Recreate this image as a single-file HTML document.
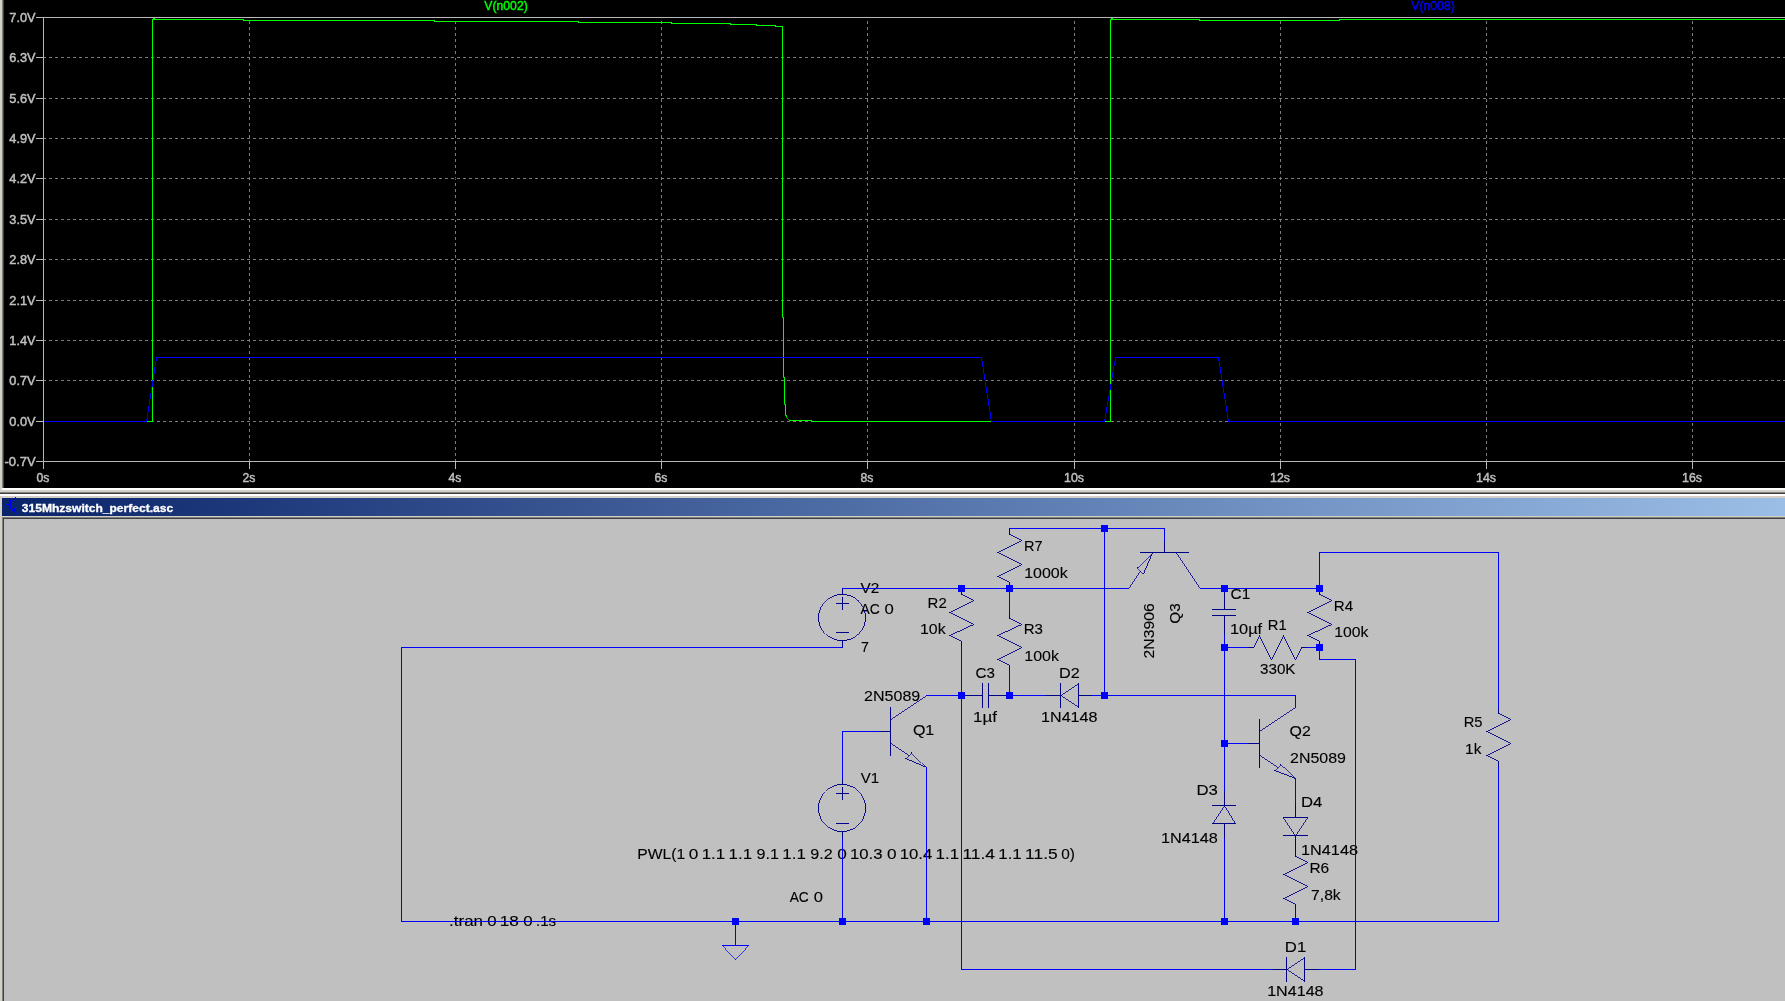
<!DOCTYPE html>
<html><head><meta charset="utf-8"><title>LTspice</title>
<style>
html,body{margin:0;padding:0;background:#c0c0c0;}
body{width:1785px;height:1001px;overflow:hidden;position:relative;font-family:"Liberation Sans",sans-serif;}
svg{position:absolute;left:0;top:0;display:block;will-change:transform;}
text{font-family:"Liberation Sans",sans-serif;white-space:pre;}
.c{shape-rendering:crispEdges;fill:none;stroke-width:1;stroke-linecap:square;}
</style></head><body>
<svg width="1785" height="1001" viewBox="0 0 1785 1001">
<defs><linearGradient id="tg" gradientUnits="userSpaceOnUse" x1="2" y1="0" x2="1922" y2="0"><stop offset="0" stop-color="#0a246a"/><stop offset="1" stop-color="#a6caf0"/></linearGradient></defs>
<g shape-rendering="crispEdges">
<rect x="0" y="0" width="1785" height="1001" fill="#c0c0c0"/>
<rect x="0" y="0" width="2" height="1001" fill="#d4d0c8"/>
<rect x="2" y="0" width="1" height="488" fill="#808080"/>
<rect x="3" y="0" width="1" height="488" fill="#404040"/>
<rect x="4" y="0" width="1781" height="488" fill="#000"/>
<rect x="2" y="488" width="1783" height="2" fill="#fff"/>
<rect x="0" y="490" width="1785" height="2" fill="#d4d0c8"/>
<rect x="0" y="492" width="1785" height="1" fill="#808080"/>
<rect x="0" y="493" width="1785" height="1" fill="#404040"/>
<rect x="0" y="494" width="1785" height="2" fill="#fff"/>
<rect x="0" y="496" width="1785" height="2" fill="#d4d0c8"/>
<rect x="2" y="498" width="1783" height="18" fill="url(#tg)"/>
<rect x="0" y="516" width="1785" height="1" fill="#d4d0c8"/>
<rect x="2" y="517" width="1783" height="1" fill="#808080"/>
<rect x="2" y="518" width="1" height="483" fill="#808080"/>
<rect x="3" y="518" width="1782" height="1" fill="#404040"/>
<rect x="3" y="519" width="1" height="482" fill="#404040"/>
</g>
<g class="c" style="stroke-linecap:butt">
<line x1="249.5" y1="21" x2="249.5" y2="461" stroke="#7c7c7c" stroke-dasharray="3 3"/>
<line x1="455.5" y1="21" x2="455.5" y2="461" stroke="#7c7c7c" stroke-dasharray="3 3"/>
<line x1="661.5" y1="21" x2="661.5" y2="461" stroke="#7c7c7c" stroke-dasharray="3 3"/>
<line x1="867.5" y1="21" x2="867.5" y2="461" stroke="#7c7c7c" stroke-dasharray="3 3"/>
<line x1="1074.5" y1="21" x2="1074.5" y2="461" stroke="#7c7c7c" stroke-dasharray="3 3"/>
<line x1="1280.5" y1="21" x2="1280.5" y2="461" stroke="#7c7c7c" stroke-dasharray="3 3"/>
<line x1="1486.5" y1="21" x2="1486.5" y2="461" stroke="#7c7c7c" stroke-dasharray="3 3"/>
<line x1="1692.5" y1="21" x2="1692.5" y2="461" stroke="#7c7c7c" stroke-dasharray="3 3"/>
<line x1="44" y1="57.5" x2="1785" y2="57.5" stroke="#000"/>
<line x1="43" y1="57.5" x2="1785" y2="57.5" stroke="#7c7c7c" stroke-dasharray="3 3"/>
<line x1="44" y1="98.5" x2="1785" y2="98.5" stroke="#000"/>
<line x1="43" y1="98.5" x2="1785" y2="98.5" stroke="#7c7c7c" stroke-dasharray="3 3"/>
<line x1="44" y1="138.5" x2="1785" y2="138.5" stroke="#000"/>
<line x1="43" y1="138.5" x2="1785" y2="138.5" stroke="#7c7c7c" stroke-dasharray="3 3"/>
<line x1="44" y1="178.5" x2="1785" y2="178.5" stroke="#000"/>
<line x1="43" y1="178.5" x2="1785" y2="178.5" stroke="#7c7c7c" stroke-dasharray="3 3"/>
<line x1="44" y1="219.5" x2="1785" y2="219.5" stroke="#000"/>
<line x1="43" y1="219.5" x2="1785" y2="219.5" stroke="#7c7c7c" stroke-dasharray="3 3"/>
<line x1="44" y1="259.5" x2="1785" y2="259.5" stroke="#000"/>
<line x1="43" y1="259.5" x2="1785" y2="259.5" stroke="#7c7c7c" stroke-dasharray="3 3"/>
<line x1="44" y1="300.5" x2="1785" y2="300.5" stroke="#000"/>
<line x1="43" y1="300.5" x2="1785" y2="300.5" stroke="#7c7c7c" stroke-dasharray="3 3"/>
<line x1="44" y1="340.5" x2="1785" y2="340.5" stroke="#000"/>
<line x1="43" y1="340.5" x2="1785" y2="340.5" stroke="#7c7c7c" stroke-dasharray="3 3"/>
<line x1="44" y1="380.5" x2="1785" y2="380.5" stroke="#000"/>
<line x1="43" y1="380.5" x2="1785" y2="380.5" stroke="#7c7c7c" stroke-dasharray="3 3"/>
<line x1="44" y1="421.5" x2="1785" y2="421.5" stroke="#000"/>
<line x1="43" y1="421.5" x2="1785" y2="421.5" stroke="#7c7c7c" stroke-dasharray="3 3"/>
<line x1="36" y1="17.5" x2="1785" y2="17.5" stroke="#b8b8b8"/>
<line x1="36" y1="461.5" x2="1785" y2="461.5" stroke="#b8b8b8"/>
<line x1="43.5" y1="17" x2="43.5" y2="469" stroke="#b8b8b8"/>
<line x1="36" y1="57.5" x2="43" y2="57.5" stroke="#b8b8b8"/>
<line x1="36" y1="98.5" x2="43" y2="98.5" stroke="#b8b8b8"/>
<line x1="36" y1="138.5" x2="43" y2="138.5" stroke="#b8b8b8"/>
<line x1="36" y1="178.5" x2="43" y2="178.5" stroke="#b8b8b8"/>
<line x1="36" y1="219.5" x2="43" y2="219.5" stroke="#b8b8b8"/>
<line x1="36" y1="259.5" x2="43" y2="259.5" stroke="#b8b8b8"/>
<line x1="36" y1="300.5" x2="43" y2="300.5" stroke="#b8b8b8"/>
<line x1="36" y1="340.5" x2="43" y2="340.5" stroke="#b8b8b8"/>
<line x1="36" y1="380.5" x2="43" y2="380.5" stroke="#b8b8b8"/>
<line x1="36" y1="421.5" x2="43" y2="421.5" stroke="#b8b8b8"/>
<line x1="249.5" y1="462" x2="249.5" y2="469" stroke="#b8b8b8"/>
<line x1="455.5" y1="462" x2="455.5" y2="469" stroke="#b8b8b8"/>
<line x1="661.5" y1="462" x2="661.5" y2="469" stroke="#b8b8b8"/>
<line x1="867.5" y1="462" x2="867.5" y2="469" stroke="#b8b8b8"/>
<line x1="1074.5" y1="462" x2="1074.5" y2="469" stroke="#b8b8b8"/>
<line x1="1280.5" y1="462" x2="1280.5" y2="469" stroke="#b8b8b8"/>
<line x1="1486.5" y1="462" x2="1486.5" y2="469" stroke="#b8b8b8"/>
<line x1="1692.5" y1="462" x2="1692.5" y2="469" stroke="#b8b8b8"/>
</g><g class="c">
<line x1="44.5" y1="421.5" x2="152.5" y2="421.5" stroke="#00ff00"/><line x1="152.5" y1="421.5" x2="152.5" y2="19.5" stroke="#00ff00"/><line x1="152.5" y1="19.5" x2="243.5" y2="19.5" stroke="#00ff00"/><line x1="243.5" y1="19.5" x2="243.5" y2="20.5" stroke="#00ff00"/><line x1="243.5" y1="20.5" x2="434.5" y2="20.5" stroke="#00ff00"/><line x1="434.5" y1="20.5" x2="434.5" y2="21.5" stroke="#00ff00"/><line x1="434.5" y1="21.5" x2="578.5" y2="21.5" stroke="#00ff00"/><line x1="578.5" y1="21.5" x2="578.5" y2="22.5" stroke="#00ff00"/><line x1="578.5" y1="22.5" x2="671.5" y2="22.5" stroke="#00ff00"/><line x1="671.5" y1="22.5" x2="671.5" y2="23.5" stroke="#00ff00"/><line x1="671.5" y1="23.5" x2="730.5" y2="23.5" stroke="#00ff00"/><line x1="730.5" y1="23.5" x2="730.5" y2="24.5" stroke="#00ff00"/><line x1="730.5" y1="24.5" x2="756.5" y2="24.5" stroke="#00ff00"/><line x1="756.5" y1="24.5" x2="756.5" y2="25.5" stroke="#00ff00"/><line x1="756.5" y1="25.5" x2="775.5" y2="25.5" stroke="#00ff00"/><line x1="775.5" y1="25.5" x2="775.5" y2="26.5" stroke="#00ff00"/><line x1="775.5" y1="26.5" x2="782.5" y2="26.5" stroke="#00ff00"/><line x1="782.5" y1="26.5" x2="782.5" y2="316.5" stroke="#00ff00"/><line x1="782.75" y1="316.50" x2="783.75" y2="317.50" stroke="#00ff00" stroke-width="0.700" stroke-linecap="butt"/><line x1="783.5" y1="317.5" x2="783.5" y2="376.5" stroke="#00ff00"/><line x1="783.75" y1="376.50" x2="784.75" y2="377.50" stroke="#00ff00" stroke-width="0.700" stroke-linecap="butt"/><line x1="784.5" y1="377.5" x2="784.5" y2="403.5" stroke="#00ff00"/><line x1="784.75" y1="403.50" x2="785.75" y2="404.50" stroke="#00ff00" stroke-width="0.700" stroke-linecap="butt"/><line x1="785.5" y1="404.5" x2="785.5" y2="414.5" stroke="#00ff00"/><line x1="785.75" y1="414.50" x2="786.75" y2="415.50" stroke="#00ff00" stroke-width="0.700" stroke-linecap="butt"/><line x1="786.5" y1="415.5" x2="786.5" y2="416.5" stroke="#00ff00"/><line x1="786.75" y1="416.50" x2="790.75" y2="420.50" stroke="#00ff00" stroke-width="0.700" stroke-linecap="butt"/><line x1="790.5" y1="420.5" x2="811.5" y2="420.5" stroke="#00ff00"/><line x1="811.5" y1="420.5" x2="811.5" y2="421.5" stroke="#00ff00"/><line x1="811.5" y1="421.5" x2="1110.5" y2="421.5" stroke="#00ff00"/><line x1="1110.5" y1="421.5" x2="1110.5" y2="19.5" stroke="#00ff00"/><line x1="1110.5" y1="19.5" x2="1199.5" y2="19.5" stroke="#00ff00"/><line x1="1199.5" y1="19.5" x2="1199.5" y2="20.5" stroke="#00ff00"/><line x1="1199.5" y1="20.5" x2="1339.5" y2="20.5" stroke="#00ff00"/><line x1="1339.5" y1="20.5" x2="1339.5" y2="19.5" stroke="#00ff00"/><line x1="1339.5" y1="19.5" x2="1785.5" y2="19.5" stroke="#00ff00"/>
<path d="M1111.5,18.5 h1" stroke="#00ff00"/>
<path d="M153.5,18.5 h1" stroke="#00ff00"/>
<line x1="44.5" y1="421.5" x2="146.5" y2="421.5" stroke="#0000ff"/><line x1="146.50" y1="421.75" x2="156.50" y2="357.75" stroke="#0000ff" stroke-width="0.978" stroke-linecap="butt"/><line x1="156.5" y1="357.5" x2="981.5" y2="357.5" stroke="#0000ff"/><line x1="981.50" y1="357.75" x2="991.50" y2="421.75" stroke="#0000ff" stroke-width="0.978" stroke-linecap="butt"/><line x1="991.5" y1="421.5" x2="1104.5" y2="421.5" stroke="#0000ff"/><line x1="1104.50" y1="421.75" x2="1115.50" y2="357.75" stroke="#0000ff" stroke-width="0.976" stroke-linecap="butt"/><line x1="1115.5" y1="357.5" x2="1218.5" y2="357.5" stroke="#0000ff"/><line x1="1218.50" y1="357.75" x2="1228.50" y2="421.75" stroke="#0000ff" stroke-width="0.978" stroke-linecap="butt"/><line x1="1228.5" y1="421.5" x2="1785.5" y2="421.5" stroke="#0000ff"/>
</g>
<g>
<text transform="translate(860.40,593.00) scale(1.0094,1.0000)" style="font-size:15.2px;fill:#000;stroke:#000;stroke-width:0.12px">V2</text>
<text transform="translate(860.40,613.50) scale(0.9111,1.0000)" style="font-size:15.2px;fill:#000;stroke:#000;stroke-width:0.12px">AC</text>
<text transform="translate(884.60,613.50) scale(1.1003,1.0000)" style="font-size:15.2px;fill:#000;stroke:#000;stroke-width:0.12px">0</text>
<text transform="translate(860.90,651.50) scale(0.9375,1.0000)" style="font-size:15.2px;fill:#000;stroke:#000;stroke-width:0.12px">7</text>
<text transform="translate(927.61,608.00) scale(0.9851,1.0000)" style="font-size:15.2px;fill:#000;stroke:#000;stroke-width:0.12px">R2</text>
<text transform="translate(919.95,634.00) scale(1.0463,1.0000)" style="font-size:15.2px;fill:#000;stroke:#000;stroke-width:0.12px">10k</text>
<text transform="translate(1023.94,551.00) scale(0.9573,1.0000)" style="font-size:15.2px;fill:#000;stroke:#000;stroke-width:0.12px">R7</text>
<text transform="translate(1024.15,578.00) scale(1.0518,1.0000)" style="font-size:15.2px;fill:#000;stroke:#000;stroke-width:0.12px">1000k</text>
<text transform="translate(1023.71,634.00) scale(0.9907,1.0000)" style="font-size:15.2px;fill:#000;stroke:#000;stroke-width:0.12px">R3</text>
<text transform="translate(1024.25,660.50) scale(1.0513,1.0000)" style="font-size:15.2px;fill:#000;stroke:#000;stroke-width:0.12px">100k</text>
<text transform="translate(975.60,678.00) scale(0.9964,1.0000)" style="font-size:15.2px;fill:#000;stroke:#000;stroke-width:0.12px">C3</text>
<text transform="translate(972.98,721.50) scale(1.1181,1.0000)" style="font-size:15.2px;fill:#000;stroke:#000;stroke-width:0.12px">1µf</text>
<text transform="translate(1059.03,678.00) scale(1.0686,1.0000)" style="font-size:15.2px;fill:#000;stroke:#000;stroke-width:0.12px">D2</text>
<text transform="translate(1041.04,721.50) scale(1.0608,1.0000)" style="font-size:15.2px;fill:#000;stroke:#000;stroke-width:0.12px">1N4148</text>
<text transform="translate(864.10,700.70) scale(1.0558,1.0000)" style="font-size:15.2px;fill:#000;stroke:#000;stroke-width:0.12px">2N5089</text>
<text transform="translate(912.90,734.60) scale(1.0548,1.0000)" style="font-size:15.2px;fill:#000;stroke:#000;stroke-width:0.12px">Q1</text>
<text transform="translate(860.70,782.70) scale(0.9873,1.0000)" style="font-size:15.2px;fill:#000;stroke:#000;stroke-width:0.12px">V1</text>
<text transform="translate(637.17,858.60) scale(1.0327,1.0000)" style="font-size:15.2px;fill:#000;stroke:#000;stroke-width:0.12px">PWL(1</text>
<text transform="translate(688.87,858.60) scale(1.1313,1.0000)" style="font-size:15.2px;fill:#000;stroke:#000;stroke-width:0.12px">0</text>
<text transform="translate(701.69,858.60) scale(1.1128,1.0000)" style="font-size:15.2px;fill:#000;stroke:#000;stroke-width:0.12px">1.1</text>
<text transform="translate(728.56,858.60) scale(1.1128,1.0000)" style="font-size:15.2px;fill:#000;stroke:#000;stroke-width:0.12px">1.1</text>
<text transform="translate(756.54,858.60) scale(1.0589,1.0000)" style="font-size:15.2px;fill:#000;stroke:#000;stroke-width:0.12px">9.1</text>
<text transform="translate(782.30,858.60) scale(1.1128,1.0000)" style="font-size:15.2px;fill:#000;stroke:#000;stroke-width:0.12px">1.1</text>
<text transform="translate(810.29,858.60) scale(1.0589,1.0000)" style="font-size:15.2px;fill:#000;stroke:#000;stroke-width:0.12px">9.2</text>
<text transform="translate(837.16,858.60) scale(1.1313,1.0000)" style="font-size:15.2px;fill:#000;stroke:#000;stroke-width:0.12px">0</text>
<text transform="translate(849.99,858.60) scale(1.1004,1.0000)" style="font-size:15.2px;fill:#000;stroke:#000;stroke-width:0.12px">10.3</text>
<text transform="translate(886.92,858.60) scale(1.1313,1.0000)" style="font-size:15.2px;fill:#000;stroke:#000;stroke-width:0.12px">0</text>
<text transform="translate(899.75,858.60) scale(1.1004,1.0000)" style="font-size:15.2px;fill:#000;stroke:#000;stroke-width:0.12px">10.4</text>
<text transform="translate(935.57,858.60) scale(1.1128,1.0000)" style="font-size:15.2px;fill:#000;stroke:#000;stroke-width:0.12px">1.1</text>
<text transform="translate(962.41,858.60) scale(1.1464,1.0000)" style="font-size:15.2px;fill:#000;stroke:#000;stroke-width:0.12px">11.4</text>
<text transform="translate(998.27,858.60) scale(1.1128,1.0000)" style="font-size:15.2px;fill:#000;stroke:#000;stroke-width:0.12px">1.1</text>
<text transform="translate(1025.11,858.60) scale(1.1464,1.0000)" style="font-size:15.2px;fill:#000;stroke:#000;stroke-width:0.12px">11.5</text>
<text transform="translate(1061.18,858.60) scale(1.0127,1.0000)" style="font-size:15.2px;fill:#000;stroke:#000;stroke-width:0.12px">0)</text>
<text transform="translate(789.70,901.70) scale(0.9029,1.0000)" style="font-size:15.2px;fill:#000;stroke:#000;stroke-width:0.12px">AC</text>
<text transform="translate(813.68,901.70) scale(1.0902,1.0000)" style="font-size:15.2px;fill:#000;stroke:#000;stroke-width:0.12px">0</text>
<text transform="translate(449.08,925.70) scale(1.1154,1.0000)" style="font-size:15.2px;fill:#000;stroke:#000;stroke-width:0.12px">.tran</text>
<text transform="translate(487.26,925.70) scale(1.1086,1.0000)" style="font-size:15.2px;fill:#000;stroke:#000;stroke-width:0.12px">0</text>
<text transform="translate(499.78,925.70) scale(1.1325,1.0000)" style="font-size:15.2px;fill:#000;stroke:#000;stroke-width:0.12px">18</text>
<text transform="translate(523.34,925.70) scale(1.1086,1.0000)" style="font-size:15.2px;fill:#000;stroke:#000;stroke-width:0.12px">0</text>
<text transform="translate(536.00,925.70) scale(0.9968,1.0000)" style="font-size:15.2px;fill:#000;stroke:#000;stroke-width:0.12px">.1s</text>
<text transform="translate(1153.80,658.40) rotate(-90) scale(1.0350,1.0000)" style="font-size:15.2px;fill:#000;stroke:#000;stroke-width:0.12px">2N3906</text>
<text transform="translate(1180.40,623.70) rotate(-90) scale(1.0044,1.0000)" style="font-size:15.2px;fill:#000;stroke:#000;stroke-width:0.12px">Q3</text>
<text transform="translate(1230.60,598.60) scale(1.0070,1.0000)" style="font-size:15.2px;fill:#000;stroke:#000;stroke-width:0.12px">C1</text>
<text transform="translate(1230.02,633.60) scale(1.0761,1.0000)" style="font-size:15.2px;fill:#000;stroke:#000;stroke-width:0.12px">10µf</text>
<text transform="translate(1267.73,629.70) scale(0.9740,1.0000)" style="font-size:15.2px;fill:#000;stroke:#000;stroke-width:0.12px">R1</text>
<text transform="translate(1260.00,673.60) scale(0.9989,1.0000)" style="font-size:15.2px;fill:#000;stroke:#000;stroke-width:0.12px">330K</text>
<text transform="translate(1333.80,610.80) scale(0.9962,1.0000)" style="font-size:15.2px;fill:#000;stroke:#000;stroke-width:0.12px">R4</text>
<text transform="translate(1334.16,636.70) scale(1.0390,1.0000)" style="font-size:15.2px;fill:#000;stroke:#000;stroke-width:0.12px">100k</text>
<text transform="translate(1289.60,735.80) scale(1.0448,1.0000)" style="font-size:15.2px;fill:#000;stroke:#000;stroke-width:0.12px">Q2</text>
<text transform="translate(1290.10,762.70) scale(1.0502,1.0000)" style="font-size:15.2px;fill:#000;stroke:#000;stroke-width:0.12px">2N5089</text>
<text transform="translate(1196.50,794.70) scale(1.1020,1.0000)" style="font-size:15.2px;fill:#000;stroke:#000;stroke-width:0.12px">D3</text>
<text transform="translate(1160.93,842.60) scale(1.0704,1.0000)" style="font-size:15.2px;fill:#000;stroke:#000;stroke-width:0.12px">1N4148</text>
<text transform="translate(1301.00,806.60) scale(1.1020,1.0000)" style="font-size:15.2px;fill:#000;stroke:#000;stroke-width:0.12px">D4</text>
<text transform="translate(1301.03,854.60) scale(1.0704,1.0000)" style="font-size:15.2px;fill:#000;stroke:#000;stroke-width:0.12px">1N4148</text>
<text transform="translate(1309.38,872.60) scale(1.0185,1.0000)" style="font-size:15.2px;fill:#000;stroke:#000;stroke-width:0.12px">R6</text>
<text transform="translate(1311.10,899.60) scale(1.0305,1.0000)" style="font-size:15.2px;fill:#000;stroke:#000;stroke-width:0.12px">7,8k</text>
<text transform="translate(1463.73,726.60) scale(0.9684,1.0000)" style="font-size:15.2px;fill:#000;stroke:#000;stroke-width:0.12px">R5</text>
<text transform="translate(1465.08,753.70) scale(1.0164,1.0000)" style="font-size:15.2px;fill:#000;stroke:#000;stroke-width:0.12px">1k</text>
<text transform="translate(1284.80,951.70) scale(1.1020,1.0000)" style="font-size:15.2px;fill:#000;stroke:#000;stroke-width:0.12px">D1</text>
<text transform="translate(1267.14,995.60) scale(1.0608,1.0000)" style="font-size:15.2px;fill:#000;stroke:#000;stroke-width:0.12px">1N4148</text>
<text transform="translate(9.30,21.85) scale(1.0656,1.0500)" style="font-size:12.0px;fill:#c0c0c0;stroke:#c0c0c0;stroke-width:0.42px">7.0V</text>
<text transform="translate(9.30,61.85) scale(1.0656,1.0500)" style="font-size:12.0px;fill:#c0c0c0;stroke:#c0c0c0;stroke-width:0.42px">6.3V</text>
<text transform="translate(9.30,102.85) scale(1.0656,1.0500)" style="font-size:12.0px;fill:#c0c0c0;stroke:#c0c0c0;stroke-width:0.42px">5.6V</text>
<text transform="translate(9.30,142.85) scale(1.0656,1.0500)" style="font-size:12.0px;fill:#c0c0c0;stroke:#c0c0c0;stroke-width:0.42px">4.9V</text>
<text transform="translate(9.30,182.85) scale(1.0656,1.0500)" style="font-size:12.0px;fill:#c0c0c0;stroke:#c0c0c0;stroke-width:0.42px">4.2V</text>
<text transform="translate(9.30,223.85) scale(1.0656,1.0500)" style="font-size:12.0px;fill:#c0c0c0;stroke:#c0c0c0;stroke-width:0.42px">3.5V</text>
<text transform="translate(9.30,263.85) scale(1.0656,1.0500)" style="font-size:12.0px;fill:#c0c0c0;stroke:#c0c0c0;stroke-width:0.42px">2.8V</text>
<text transform="translate(9.30,304.85) scale(1.0656,1.0500)" style="font-size:12.0px;fill:#c0c0c0;stroke:#c0c0c0;stroke-width:0.42px">2.1V</text>
<text transform="translate(9.30,344.85) scale(1.0656,1.0500)" style="font-size:12.0px;fill:#c0c0c0;stroke:#c0c0c0;stroke-width:0.42px">1.4V</text>
<text transform="translate(9.30,384.85) scale(1.0656,1.0500)" style="font-size:12.0px;fill:#c0c0c0;stroke:#c0c0c0;stroke-width:0.42px">0.7V</text>
<text transform="translate(9.30,425.85) scale(1.0656,1.0500)" style="font-size:12.0px;fill:#c0c0c0;stroke:#c0c0c0;stroke-width:0.42px">0.0V</text>
<text transform="translate(4.40,465.85) scale(1.0880,1.0500)" style="font-size:12.0px;fill:#c0c0c0;stroke:#c0c0c0;stroke-width:0.42px">-0.7V</text>
<text transform="translate(36.55,482.00) scale(1.0178,1.0500)" style="font-size:12.0px;fill:#c0c0c0;stroke:#c0c0c0;stroke-width:0.42px">0s</text>
<text transform="translate(242.55,482.00) scale(1.0178,1.0500)" style="font-size:12.0px;fill:#c0c0c0;stroke:#c0c0c0;stroke-width:0.42px">2s</text>
<text transform="translate(448.55,482.00) scale(1.0178,1.0500)" style="font-size:12.0px;fill:#c0c0c0;stroke:#c0c0c0;stroke-width:0.42px">4s</text>
<text transform="translate(654.55,482.00) scale(1.0178,1.0500)" style="font-size:12.0px;fill:#c0c0c0;stroke:#c0c0c0;stroke-width:0.42px">6s</text>
<text transform="translate(860.55,482.00) scale(1.0178,1.0500)" style="font-size:12.0px;fill:#c0c0c0;stroke:#c0c0c0;stroke-width:0.42px">8s</text>
<text transform="translate(1064.00,482.00) scale(1.0337,1.0500)" style="font-size:12.0px;fill:#c0c0c0;stroke:#c0c0c0;stroke-width:0.42px">10s</text>
<text transform="translate(1270.00,482.00) scale(1.0337,1.0500)" style="font-size:12.0px;fill:#c0c0c0;stroke:#c0c0c0;stroke-width:0.42px">12s</text>
<text transform="translate(1476.00,482.00) scale(1.0337,1.0500)" style="font-size:12.0px;fill:#c0c0c0;stroke:#c0c0c0;stroke-width:0.42px">14s</text>
<text transform="translate(1682.00,482.00) scale(1.0337,1.0500)" style="font-size:12.0px;fill:#c0c0c0;stroke:#c0c0c0;stroke-width:0.42px">16s</text>
<text transform="translate(484.30,10.40) scale(1.0188,1.0500)" style="font-size:12.0px;fill:#00ff00;stroke:#00ff00;stroke-width:0.42px">V(n002)</text>
<text transform="translate(1411.30,10.40) scale(1.0188,1.0500)" style="font-size:12.0px;fill:#0000ff;stroke:#0000ff;stroke-width:0.42px">V(n008)</text>
<text transform="translate(21.80,512.00) scale(1.0960,1.0000)" style="font-size:11px;fill:#fff;stroke:#fff;stroke-width:0.3px;font-weight:bold">315Mhzswitch_perfect.asc</text>
</g>
<g class="c">
<line x1="1009.5" y1="528.5" x2="1009.5" y2="534.5" stroke="#000088"/><line x1="1009.75" y1="534.50" x2="1021.75" y2="540.50" stroke="#000088" stroke-width="0.885" stroke-linecap="butt"/><line x1="1021.75" y1="540.50" x2="997.75" y2="552.50" stroke="#000088" stroke-width="0.885" stroke-linecap="butt"/><line x1="997.75" y1="552.50" x2="1021.75" y2="564.50" stroke="#000088" stroke-width="0.885" stroke-linecap="butt"/><line x1="1021.75" y1="564.50" x2="997.75" y2="576.50" stroke="#000088" stroke-width="0.885" stroke-linecap="butt"/><line x1="997.75" y1="576.50" x2="1009.75" y2="582.50" stroke="#000088" stroke-width="0.885" stroke-linecap="butt"/><line x1="1009.5" y1="582.5" x2="1009.5" y2="588.5" stroke="#000088"/>
<rect x="1009" y="528" width="1" height="1" fill="#000088" stroke="none"/><rect x="1009" y="534" width="1" height="1" fill="#000088" stroke="none"/><rect x="1021" y="540" width="1" height="1" fill="#000088" stroke="none"/><rect x="997" y="552" width="1" height="1" fill="#000088" stroke="none"/><rect x="1021" y="564" width="1" height="1" fill="#000088" stroke="none"/><rect x="997" y="576" width="1" height="1" fill="#000088" stroke="none"/><rect x="1009" y="582" width="1" height="1" fill="#000088" stroke="none"/><rect x="1009" y="588" width="1" height="1" fill="#000088" stroke="none"/>
<line x1="961.5" y1="588.5" x2="961.5" y2="594.5" stroke="#000088"/><line x1="961.75" y1="594.50" x2="973.75" y2="600.50" stroke="#000088" stroke-width="0.885" stroke-linecap="butt"/><line x1="973.75" y1="600.50" x2="949.75" y2="612.50" stroke="#000088" stroke-width="0.885" stroke-linecap="butt"/><line x1="949.75" y1="612.50" x2="973.75" y2="624.50" stroke="#000088" stroke-width="0.885" stroke-linecap="butt"/><line x1="973.75" y1="624.50" x2="949.75" y2="635.50" stroke="#000088" stroke-width="0.900" stroke-linecap="butt"/><line x1="949.75" y1="635.50" x2="961.75" y2="641.50" stroke="#000088" stroke-width="0.885" stroke-linecap="butt"/><line x1="961.5" y1="641.5" x2="961.5" y2="647.5" stroke="#000088"/>
<rect x="961" y="588" width="1" height="1" fill="#000088" stroke="none"/><rect x="961" y="594" width="1" height="1" fill="#000088" stroke="none"/><rect x="973" y="600" width="1" height="1" fill="#000088" stroke="none"/><rect x="949" y="612" width="1" height="1" fill="#000088" stroke="none"/><rect x="973" y="624" width="1" height="1" fill="#000088" stroke="none"/><rect x="949" y="635" width="1" height="1" fill="#000088" stroke="none"/><rect x="961" y="641" width="1" height="1" fill="#000088" stroke="none"/><rect x="961" y="647" width="1" height="1" fill="#000088" stroke="none"/>
<line x1="1009.5" y1="612.5" x2="1009.5" y2="618.5" stroke="#000088"/><line x1="1009.75" y1="618.50" x2="1021.75" y2="624.50" stroke="#000088" stroke-width="0.885" stroke-linecap="butt"/><line x1="1021.75" y1="624.50" x2="997.75" y2="635.50" stroke="#000088" stroke-width="0.900" stroke-linecap="butt"/><line x1="997.75" y1="635.50" x2="1021.75" y2="647.50" stroke="#000088" stroke-width="0.885" stroke-linecap="butt"/><line x1="1021.75" y1="647.50" x2="997.75" y2="659.50" stroke="#000088" stroke-width="0.885" stroke-linecap="butt"/><line x1="997.75" y1="659.50" x2="1009.75" y2="665.50" stroke="#000088" stroke-width="0.885" stroke-linecap="butt"/><line x1="1009.5" y1="665.5" x2="1009.5" y2="671.5" stroke="#000088"/>
<rect x="1009" y="612" width="1" height="1" fill="#000088" stroke="none"/><rect x="1009" y="618" width="1" height="1" fill="#000088" stroke="none"/><rect x="1021" y="624" width="1" height="1" fill="#000088" stroke="none"/><rect x="997" y="635" width="1" height="1" fill="#000088" stroke="none"/><rect x="1021" y="647" width="1" height="1" fill="#000088" stroke="none"/><rect x="997" y="659" width="1" height="1" fill="#000088" stroke="none"/><rect x="1009" y="665" width="1" height="1" fill="#000088" stroke="none"/><rect x="1009" y="671" width="1" height="1" fill="#000088" stroke="none"/>
<line x1="1319.5" y1="588.5" x2="1319.5" y2="594.5" stroke="#000088"/><line x1="1319.75" y1="594.50" x2="1331.75" y2="600.50" stroke="#000088" stroke-width="0.885" stroke-linecap="butt"/><line x1="1331.75" y1="600.50" x2="1307.75" y2="612.50" stroke="#000088" stroke-width="0.885" stroke-linecap="butt"/><line x1="1307.75" y1="612.50" x2="1331.75" y2="624.50" stroke="#000088" stroke-width="0.885" stroke-linecap="butt"/><line x1="1331.75" y1="624.50" x2="1307.75" y2="635.50" stroke="#000088" stroke-width="0.900" stroke-linecap="butt"/><line x1="1307.75" y1="635.50" x2="1319.75" y2="641.50" stroke="#000088" stroke-width="0.885" stroke-linecap="butt"/><line x1="1319.5" y1="641.5" x2="1319.5" y2="647.5" stroke="#000088"/>
<rect x="1319" y="588" width="1" height="1" fill="#000088" stroke="none"/><rect x="1319" y="594" width="1" height="1" fill="#000088" stroke="none"/><rect x="1331" y="600" width="1" height="1" fill="#000088" stroke="none"/><rect x="1307" y="612" width="1" height="1" fill="#000088" stroke="none"/><rect x="1331" y="624" width="1" height="1" fill="#000088" stroke="none"/><rect x="1307" y="635" width="1" height="1" fill="#000088" stroke="none"/><rect x="1319" y="641" width="1" height="1" fill="#000088" stroke="none"/><rect x="1319" y="647" width="1" height="1" fill="#000088" stroke="none"/>
<line x1="1295.5" y1="850.5" x2="1295.5" y2="856.5" stroke="#000088"/><line x1="1295.75" y1="856.50" x2="1307.75" y2="862.50" stroke="#000088" stroke-width="0.885" stroke-linecap="butt"/><line x1="1307.75" y1="862.50" x2="1283.75" y2="874.50" stroke="#000088" stroke-width="0.885" stroke-linecap="butt"/><line x1="1283.75" y1="874.50" x2="1307.75" y2="886.50" stroke="#000088" stroke-width="0.885" stroke-linecap="butt"/><line x1="1307.75" y1="886.50" x2="1283.75" y2="898.50" stroke="#000088" stroke-width="0.885" stroke-linecap="butt"/><line x1="1283.75" y1="898.50" x2="1295.75" y2="904.50" stroke="#000088" stroke-width="0.885" stroke-linecap="butt"/><line x1="1295.5" y1="904.5" x2="1295.5" y2="910.5" stroke="#000088"/>
<rect x="1295" y="850" width="1" height="1" fill="#000088" stroke="none"/><rect x="1295" y="856" width="1" height="1" fill="#000088" stroke="none"/><rect x="1307" y="862" width="1" height="1" fill="#000088" stroke="none"/><rect x="1283" y="874" width="1" height="1" fill="#000088" stroke="none"/><rect x="1307" y="886" width="1" height="1" fill="#000088" stroke="none"/><rect x="1283" y="898" width="1" height="1" fill="#000088" stroke="none"/><rect x="1295" y="904" width="1" height="1" fill="#000088" stroke="none"/><rect x="1295" y="910" width="1" height="1" fill="#000088" stroke="none"/>
<line x1="1498.5" y1="707.5" x2="1498.5" y2="713.5" stroke="#000088"/><line x1="1498.75" y1="713.50" x2="1510.75" y2="719.50" stroke="#000088" stroke-width="0.885" stroke-linecap="butt"/><line x1="1510.75" y1="719.50" x2="1486.75" y2="731.50" stroke="#000088" stroke-width="0.885" stroke-linecap="butt"/><line x1="1486.75" y1="731.50" x2="1510.75" y2="743.50" stroke="#000088" stroke-width="0.885" stroke-linecap="butt"/><line x1="1510.75" y1="743.50" x2="1486.75" y2="755.50" stroke="#000088" stroke-width="0.885" stroke-linecap="butt"/><line x1="1486.75" y1="755.50" x2="1498.75" y2="761.50" stroke="#000088" stroke-width="0.885" stroke-linecap="butt"/><line x1="1498.5" y1="761.5" x2="1498.5" y2="767.5" stroke="#000088"/>
<rect x="1498" y="707" width="1" height="1" fill="#000088" stroke="none"/><rect x="1498" y="713" width="1" height="1" fill="#000088" stroke="none"/><rect x="1510" y="719" width="1" height="1" fill="#000088" stroke="none"/><rect x="1486" y="731" width="1" height="1" fill="#000088" stroke="none"/><rect x="1510" y="743" width="1" height="1" fill="#000088" stroke="none"/><rect x="1486" y="755" width="1" height="1" fill="#000088" stroke="none"/><rect x="1498" y="761" width="1" height="1" fill="#000088" stroke="none"/><rect x="1498" y="767" width="1" height="1" fill="#000088" stroke="none"/>
<line x1="1307.5" y1="647.5" x2="1301.5" y2="647.5" stroke="#000088"/><line x1="1301.50" y1="647.75" x2="1295.50" y2="659.75" stroke="#000088" stroke-width="0.885" stroke-linecap="butt"/><line x1="1295.50" y1="659.75" x2="1283.50" y2="635.75" stroke="#000088" stroke-width="0.885" stroke-linecap="butt"/><line x1="1283.50" y1="635.75" x2="1271.50" y2="659.75" stroke="#000088" stroke-width="0.885" stroke-linecap="butt"/><line x1="1271.50" y1="659.75" x2="1259.50" y2="635.75" stroke="#000088" stroke-width="0.885" stroke-linecap="butt"/><line x1="1259.50" y1="635.75" x2="1253.50" y2="647.75" stroke="#000088" stroke-width="0.885" stroke-linecap="butt"/><line x1="1253.5" y1="647.5" x2="1247.5" y2="647.5" stroke="#000088"/>
<rect x="1307" y="647" width="1" height="1" fill="#000088" stroke="none"/><rect x="1301" y="647" width="1" height="1" fill="#000088" stroke="none"/><rect x="1295" y="659" width="1" height="1" fill="#000088" stroke="none"/><rect x="1283" y="635" width="1" height="1" fill="#000088" stroke="none"/><rect x="1271" y="659" width="1" height="1" fill="#000088" stroke="none"/><rect x="1259" y="635" width="1" height="1" fill="#000088" stroke="none"/><rect x="1253" y="647" width="1" height="1" fill="#000088" stroke="none"/><rect x="1247" y="647" width="1" height="1" fill="#000088" stroke="none"/>
<line x1="1224.5" y1="588.5" x2="1224.5" y2="609.5" stroke="#000088"/>
<line x1="1224.5" y1="615.5" x2="1224.5" y2="635.5" stroke="#000088"/>
<line x1="1212.5" y1="609.5" x2="1235.5" y2="609.5" stroke="#000088"/>
<line x1="1212.5" y1="615.5" x2="1235.5" y2="615.5" stroke="#000088"/>
<line x1="961.5" y1="695.5" x2="982.5" y2="695.5" stroke="#000088"/>
<line x1="988.5" y1="695.5" x2="1009.5" y2="695.5" stroke="#000088"/>
<line x1="982.5" y1="707.5" x2="982.5" y2="683.5" stroke="#000088"/>
<line x1="988.5" y1="707.5" x2="988.5" y2="683.5" stroke="#000088"/>
<line x1="1060.5" y1="683.5" x2="1060.5" y2="707.5" stroke="#000088"/>
<line x1="1078.5" y1="683.5" x2="1078.5" y2="707.5" stroke="#000088"/><line x1="1078.75" y1="707.50" x2="1060.75" y2="695.50" stroke="#000088" stroke-width="0.824" stroke-linecap="butt"/><line x1="1060.75" y1="695.50" x2="1078.75" y2="683.50" stroke="#000088" stroke-width="0.824" stroke-linecap="butt"/>
<rect x="1078" y="683" width="1" height="1" fill="#000088" stroke="none"/><rect x="1078" y="707" width="1" height="1" fill="#000088" stroke="none"/><rect x="1060" y="695" width="1" height="1" fill="#000088" stroke="none"/><rect x="1078" y="683" width="1" height="1" fill="#000088" stroke="none"/>
<line x1="1092.5" y1="695.5" x2="1078.5" y2="695.5" stroke="#000088"/>
<line x1="1060.5" y1="695.5" x2="1045.5" y2="695.5" stroke="#000088"/>
<line x1="1286.5" y1="957.5" x2="1286.5" y2="981.5" stroke="#000088"/>
<line x1="1304.5" y1="957.5" x2="1304.5" y2="981.5" stroke="#000088"/><line x1="1304.75" y1="981.50" x2="1286.75" y2="969.50" stroke="#000088" stroke-width="0.824" stroke-linecap="butt"/><line x1="1286.75" y1="969.50" x2="1304.75" y2="957.50" stroke="#000088" stroke-width="0.824" stroke-linecap="butt"/>
<rect x="1304" y="957" width="1" height="1" fill="#000088" stroke="none"/><rect x="1304" y="981" width="1" height="1" fill="#000088" stroke="none"/><rect x="1286" y="969" width="1" height="1" fill="#000088" stroke="none"/><rect x="1304" y="957" width="1" height="1" fill="#000088" stroke="none"/>
<line x1="1319.5" y1="969.5" x2="1304.5" y2="969.5" stroke="#000088"/>
<line x1="1286.5" y1="969.5" x2="1271.5" y2="969.5" stroke="#000088"/>
<line x1="1235.5" y1="805.5" x2="1212.5" y2="805.5" stroke="#000088"/>
<line x1="1235.5" y1="823.5" x2="1212.5" y2="823.5" stroke="#000088"/><line x1="1212.50" y1="823.75" x2="1224.50" y2="805.75" stroke="#000088" stroke-width="0.824" stroke-linecap="butt"/><line x1="1224.50" y1="805.75" x2="1235.50" y2="823.75" stroke="#000088" stroke-width="0.845" stroke-linecap="butt"/>
<rect x="1235" y="823" width="1" height="1" fill="#000088" stroke="none"/><rect x="1212" y="823" width="1" height="1" fill="#000088" stroke="none"/><rect x="1224" y="805" width="1" height="1" fill="#000088" stroke="none"/><rect x="1235" y="823" width="1" height="1" fill="#000088" stroke="none"/>
<line x1="1224.5" y1="838.5" x2="1224.5" y2="823.5" stroke="#000088"/>
<line x1="1224.5" y1="805.5" x2="1224.5" y2="790.5" stroke="#000088"/>
<line x1="1283.5" y1="835.5" x2="1307.5" y2="835.5" stroke="#000088"/>
<line x1="1283.5" y1="817.5" x2="1307.5" y2="817.5" stroke="#000088"/><line x1="1307.50" y1="817.75" x2="1295.50" y2="835.75" stroke="#000088" stroke-width="0.824" stroke-linecap="butt"/><line x1="1295.50" y1="835.75" x2="1283.50" y2="817.75" stroke="#000088" stroke-width="0.824" stroke-linecap="butt"/>
<rect x="1283" y="817" width="1" height="1" fill="#000088" stroke="none"/><rect x="1307" y="817" width="1" height="1" fill="#000088" stroke="none"/><rect x="1295" y="835" width="1" height="1" fill="#000088" stroke="none"/><rect x="1283" y="817" width="1" height="1" fill="#000088" stroke="none"/>
<line x1="1295.5" y1="802.5" x2="1295.5" y2="817.5" stroke="#000088"/>
<line x1="1295.5" y1="835.5" x2="1295.5" y2="850.5" stroke="#000088"/>
<line x1="836.5" y1="603.5" x2="848.5" y2="603.5" stroke="#000088"/>
<line x1="836.5" y1="632.5" x2="848.5" y2="632.5" stroke="#000088"/>
<line x1="842.5" y1="597.5" x2="842.5" y2="609.5" stroke="#000088"/>
<line x1="842.5" y1="647.5" x2="842.5" y2="641.5" stroke="#000088"/>
<line x1="842.5" y1="588.5" x2="842.5" y2="594.5" stroke="#000088"/>
<line x1="836.5" y1="793.5" x2="848.5" y2="793.5" stroke="#000088"/>
<line x1="836.5" y1="823.5" x2="848.5" y2="823.5" stroke="#000088"/>
<line x1="842.5" y1="787.5" x2="842.5" y2="799.5" stroke="#000088"/>
<line x1="842.5" y1="838.5" x2="842.5" y2="832.5" stroke="#000088"/>
<line x1="842.5" y1="778.5" x2="842.5" y2="784.5" stroke="#000088"/>
<line x1="890.5" y1="755.5" x2="890.5" y2="707.5" stroke="#000088"/>
<line x1="890.75" y1="743.50" x2="908.75" y2="755.50" stroke="#000088" stroke-width="0.824" stroke-linecap="butt"/>
<line x1="926.75" y1="695.50" x2="890.75" y2="719.50" stroke="#000088" stroke-width="0.824" stroke-linecap="butt"/>
<line x1="878.5" y1="731.5" x2="890.5" y2="731.5" stroke="#000088"/>
<line x1="926.75" y1="767.50" x2="911.75" y2="752.50" stroke="#000088" stroke-width="0.700" stroke-linecap="butt"/><line x1="911.75" y1="752.50" x2="905.75" y2="758.50" stroke="#000088" stroke-width="0.700" stroke-linecap="butt"/><line x1="905.75" y1="758.50" x2="926.75" y2="767.50" stroke="#000088" stroke-width="0.910" stroke-linecap="butt"/>
<rect x="926" y="767" width="1" height="1" fill="#000088" stroke="none"/><rect x="911" y="752" width="1" height="1" fill="#000088" stroke="none"/><rect x="905" y="758" width="1" height="1" fill="#000088" stroke="none"/><rect x="926" y="767" width="1" height="1" fill="#000088" stroke="none"/>
<line x1="1259.5" y1="767.5" x2="1259.5" y2="719.5" stroke="#000088"/>
<line x1="1259.75" y1="755.50" x2="1277.75" y2="767.50" stroke="#000088" stroke-width="0.824" stroke-linecap="butt"/>
<line x1="1295.75" y1="707.50" x2="1259.75" y2="731.50" stroke="#000088" stroke-width="0.824" stroke-linecap="butt"/>
<line x1="1247.5" y1="743.5" x2="1259.5" y2="743.5" stroke="#000088"/>
<line x1="1295.75" y1="778.50" x2="1280.75" y2="764.50" stroke="#000088" stroke-width="0.724" stroke-linecap="butt"/><line x1="1280.75" y1="764.50" x2="1274.75" y2="770.50" stroke="#000088" stroke-width="0.700" stroke-linecap="butt"/><line x1="1274.75" y1="770.50" x2="1295.75" y2="778.50" stroke="#000088" stroke-width="0.925" stroke-linecap="butt"/>
<rect x="1295" y="778" width="1" height="1" fill="#000088" stroke="none"/><rect x="1280" y="764" width="1" height="1" fill="#000088" stroke="none"/><rect x="1274" y="770" width="1" height="1" fill="#000088" stroke="none"/><rect x="1295" y="778" width="1" height="1" fill="#000088" stroke="none"/>
<line x1="1188.5" y1="552.5" x2="1140.5" y2="552.5" stroke="#000088"/>
<line x1="1176.50" y1="552.75" x2="1200.50" y2="588.75" stroke="#000088" stroke-width="0.824" stroke-linecap="butt"/>
<line x1="1128.50" y1="588.75" x2="1140.50" y2="570.75" stroke="#000088" stroke-width="0.824" stroke-linecap="butt"/>
<line x1="1164.5" y1="540.5" x2="1164.5" y2="552.5" stroke="#000088"/>
<line x1="1152.75" y1="552.50" x2="1137.75" y2="567.50" stroke="#000088" stroke-width="0.700" stroke-linecap="butt"/><line x1="1137.75" y1="567.50" x2="1143.75" y2="573.50" stroke="#000088" stroke-width="0.700" stroke-linecap="butt"/><line x1="1143.50" y1="573.75" x2="1152.50" y2="552.75" stroke="#000088" stroke-width="0.910" stroke-linecap="butt"/>
<rect x="1152" y="552" width="1" height="1" fill="#000088" stroke="none"/><rect x="1137" y="567" width="1" height="1" fill="#000088" stroke="none"/><rect x="1143" y="573" width="1" height="1" fill="#000088" stroke="none"/><rect x="1152" y="552" width="1" height="1" fill="#000088" stroke="none"/>
<line x1="842.5" y1="647.5" x2="401.5" y2="647.5" stroke="#0000ff"/><line x1="401.5" y1="647.5" x2="401.5" y2="921.5" stroke="#0000ff"/><line x1="401.5" y1="921.5" x2="1498.5" y2="921.5" stroke="#0000ff"/><line x1="1498.5" y1="921.5" x2="1498.5" y2="767.5" stroke="#0000ff"/>
<line x1="842.5" y1="588.5" x2="1128.5" y2="588.5" stroke="#0000ff"/>
<line x1="1009.5" y1="528.5" x2="1164.5" y2="528.5" stroke="#0000ff"/><line x1="1164.5" y1="528.5" x2="1164.5" y2="540.5" stroke="#0000ff"/>
<line x1="1104.5" y1="528.5" x2="1104.5" y2="695.5" stroke="#0000ff"/>
<line x1="1009.5" y1="588.5" x2="1009.5" y2="612.5" stroke="#0000ff"/>
<line x1="1009.5" y1="671.5" x2="1009.5" y2="695.5" stroke="#0000ff"/>
<line x1="961.5" y1="647.5" x2="961.5" y2="969.5" stroke="#0000ff"/><line x1="961.5" y1="969.5" x2="1271.5" y2="969.5" stroke="#0000ff"/>
<line x1="1319.5" y1="969.5" x2="1355.5" y2="969.5" stroke="#0000ff"/><line x1="1355.5" y1="969.5" x2="1355.5" y2="659.5" stroke="#0000ff"/><line x1="1355.5" y1="659.5" x2="1319.5" y2="659.5" stroke="#0000ff"/><line x1="1319.5" y1="659.5" x2="1319.5" y2="647.5" stroke="#0000ff"/>
<line x1="926.5" y1="695.5" x2="961.5" y2="695.5" stroke="#0000ff"/>
<line x1="1009.5" y1="695.5" x2="1045.5" y2="695.5" stroke="#0000ff"/>
<line x1="1092.5" y1="695.5" x2="1295.5" y2="695.5" stroke="#0000ff"/><line x1="1295.5" y1="695.5" x2="1295.5" y2="707.5" stroke="#0000ff"/>
<line x1="1200.5" y1="588.5" x2="1319.5" y2="588.5" stroke="#0000ff"/>
<line x1="1319.5" y1="588.5" x2="1319.5" y2="552.5" stroke="#0000ff"/><line x1="1319.5" y1="552.5" x2="1498.5" y2="552.5" stroke="#0000ff"/><line x1="1498.5" y1="552.5" x2="1498.5" y2="707.5" stroke="#0000ff"/>
<line x1="1224.5" y1="635.5" x2="1224.5" y2="790.5" stroke="#0000ff"/>
<line x1="1224.5" y1="838.5" x2="1224.5" y2="921.5" stroke="#0000ff"/>
<line x1="1224.5" y1="647.5" x2="1247.5" y2="647.5" stroke="#0000ff"/>
<line x1="1307.5" y1="647.5" x2="1319.5" y2="647.5" stroke="#0000ff"/>
<line x1="1224.5" y1="743.5" x2="1247.5" y2="743.5" stroke="#0000ff"/>
<line x1="1295.5" y1="778.5" x2="1295.5" y2="802.5" stroke="#0000ff"/>
<line x1="1295.5" y1="910.5" x2="1295.5" y2="921.5" stroke="#0000ff"/>
<line x1="878.5" y1="731.5" x2="842.5" y2="731.5" stroke="#0000ff"/><line x1="842.5" y1="731.5" x2="842.5" y2="778.5" stroke="#0000ff"/>
<line x1="842.5" y1="838.5" x2="842.5" y2="921.5" stroke="#0000ff"/>
<line x1="926.5" y1="767.5" x2="926.5" y2="921.5" stroke="#0000ff"/>
<line x1="735.5" y1="921.5" x2="735.5" y2="945.5" stroke="#0000ff"/>
<line x1="722.5" y1="945.5" x2="748.5" y2="945.5" stroke="#0000ff"/><line x1="748.50" y1="945.75" x2="735.50" y2="959.75" stroke="#0000ff" stroke-width="0.725" stroke-linecap="butt"/><line x1="735.50" y1="959.75" x2="722.50" y2="945.75" stroke="#0000ff" stroke-width="0.725" stroke-linecap="butt"/>
<rect x="735" y="959" width="1" height="1" fill="#0000ff" stroke="none"/>
<rect x="958" y="585" width="7" height="7" fill="#0000ff" stroke="none"/>
<rect x="1006" y="585" width="7" height="7" fill="#0000ff" stroke="none"/>
<rect x="1101" y="525" width="7" height="7" fill="#0000ff" stroke="none"/>
<rect x="958" y="692" width="7" height="7" fill="#0000ff" stroke="none"/>
<rect x="1006" y="692" width="7" height="7" fill="#0000ff" stroke="none"/>
<rect x="1101" y="692" width="7" height="7" fill="#0000ff" stroke="none"/>
<rect x="1221" y="585" width="7" height="7" fill="#0000ff" stroke="none"/>
<rect x="1316" y="585" width="7" height="7" fill="#0000ff" stroke="none"/>
<rect x="1221" y="644" width="7" height="7" fill="#0000ff" stroke="none"/>
<rect x="1316" y="644" width="7" height="7" fill="#0000ff" stroke="none"/>
<rect x="1221" y="740" width="7" height="7" fill="#0000ff" stroke="none"/>
<rect x="732" y="918" width="7" height="7" fill="#0000ff" stroke="none"/>
<rect x="839" y="918" width="7" height="7" fill="#0000ff" stroke="none"/>
<rect x="923" y="918" width="7" height="7" fill="#0000ff" stroke="none"/>
<rect x="1221" y="918" width="7" height="7" fill="#0000ff" stroke="none"/>
<rect x="1292" y="918" width="7" height="7" fill="#0000ff" stroke="none"/>
</g>
<g class="c">
<line x1="865.50" y1="617.75" x2="865.45" y2="619.25" stroke="#000088" stroke-width="0.989" stroke-linecap="butt"/><line x1="865.45" y1="619.25" x2="865.30" y2="620.75" stroke="#000088" stroke-width="0.985" stroke-linecap="butt"/><line x1="865.30" y1="620.75" x2="865.05" y2="622.24" stroke="#000088" stroke-width="0.976" stroke-linecap="butt"/><line x1="865.05" y1="622.24" x2="864.70" y2="623.70" stroke="#000088" stroke-width="0.963" stroke-linecap="butt"/><line x1="864.70" y1="623.70" x2="864.25" y2="625.14" stroke="#000088" stroke-width="0.946" stroke-linecap="butt"/><line x1="864.25" y1="625.14" x2="863.71" y2="626.55" stroke="#000088" stroke-width="0.924" stroke-linecap="butt"/><line x1="863.71" y1="626.55" x2="863.08" y2="627.92" stroke="#000088" stroke-width="0.898" stroke-linecap="butt"/><line x1="863.08" y1="627.92" x2="862.35" y2="629.25" stroke="#000088" stroke-width="0.869" stroke-linecap="butt"/><line x1="862.35" y1="629.25" x2="861.54" y2="630.53" stroke="#000088" stroke-width="0.836" stroke-linecap="butt"/><line x1="861.54" y1="630.53" x2="860.64" y2="631.75" stroke="#000088" stroke-width="0.799" stroke-linecap="butt"/><line x1="860.64" y1="631.75" x2="859.67" y2="632.91" stroke="#000088" stroke-width="0.759" stroke-linecap="butt"/><line x1="859.67" y1="632.91" x2="858.62" y2="634.01" stroke="#000088" stroke-width="0.715" stroke-linecap="butt"/><line x1="858.87" y1="633.76" x2="857.74" y2="634.79" stroke="#000088" stroke-width="0.730" stroke-linecap="butt"/><line x1="857.74" y1="634.79" x2="856.56" y2="635.75" stroke="#000088" stroke-width="0.772" stroke-linecap="butt"/><line x1="856.56" y1="635.75" x2="855.31" y2="636.62" stroke="#000088" stroke-width="0.811" stroke-linecap="butt"/><line x1="855.31" y1="636.62" x2="854.00" y2="637.42" stroke="#000088" stroke-width="0.846" stroke-linecap="butt"/><line x1="854.00" y1="637.42" x2="852.64" y2="638.13" stroke="#000088" stroke-width="0.877" stroke-linecap="butt"/><line x1="852.64" y1="638.13" x2="851.24" y2="638.75" stroke="#000088" stroke-width="0.905" stroke-linecap="butt"/><line x1="851.24" y1="638.75" x2="849.80" y2="639.28" stroke="#000088" stroke-width="0.929" stroke-linecap="butt"/><line x1="849.80" y1="639.28" x2="848.33" y2="639.72" stroke="#000088" stroke-width="0.949" stroke-linecap="butt"/><line x1="848.33" y1="639.72" x2="846.83" y2="640.06" stroke="#000088" stroke-width="0.965" stroke-linecap="butt"/><line x1="846.83" y1="640.06" x2="845.32" y2="640.30" stroke="#000088" stroke-width="0.977" stroke-linecap="butt"/><line x1="845.32" y1="640.30" x2="843.79" y2="640.45" stroke="#000088" stroke-width="0.985" stroke-linecap="butt"/><line x1="843.79" y1="640.45" x2="842.25" y2="640.50" stroke="#000088" stroke-width="0.989" stroke-linecap="butt"/><line x1="842.25" y1="640.50" x2="840.71" y2="640.45" stroke="#000088" stroke-width="0.989" stroke-linecap="butt"/><line x1="840.71" y1="640.45" x2="839.18" y2="640.30" stroke="#000088" stroke-width="0.985" stroke-linecap="butt"/><line x1="839.18" y1="640.30" x2="837.67" y2="640.06" stroke="#000088" stroke-width="0.977" stroke-linecap="butt"/><line x1="837.67" y1="640.06" x2="836.17" y2="639.72" stroke="#000088" stroke-width="0.965" stroke-linecap="butt"/><line x1="836.17" y1="639.72" x2="834.70" y2="639.28" stroke="#000088" stroke-width="0.949" stroke-linecap="butt"/><line x1="834.70" y1="639.28" x2="833.26" y2="638.75" stroke="#000088" stroke-width="0.929" stroke-linecap="butt"/><line x1="833.26" y1="638.75" x2="831.86" y2="638.13" stroke="#000088" stroke-width="0.905" stroke-linecap="butt"/><line x1="831.86" y1="638.13" x2="830.50" y2="637.42" stroke="#000088" stroke-width="0.877" stroke-linecap="butt"/><line x1="830.50" y1="637.42" x2="829.19" y2="636.62" stroke="#000088" stroke-width="0.846" stroke-linecap="butt"/><line x1="829.19" y1="636.62" x2="827.94" y2="635.75" stroke="#000088" stroke-width="0.811" stroke-linecap="butt"/><line x1="827.94" y1="635.75" x2="826.76" y2="634.79" stroke="#000088" stroke-width="0.772" stroke-linecap="butt"/><line x1="826.76" y1="634.79" x2="825.63" y2="633.76" stroke="#000088" stroke-width="0.730" stroke-linecap="butt"/><line x1="825.38" y1="634.01" x2="824.33" y2="632.91" stroke="#000088" stroke-width="0.715" stroke-linecap="butt"/><line x1="824.33" y1="632.91" x2="823.36" y2="631.75" stroke="#000088" stroke-width="0.759" stroke-linecap="butt"/><line x1="823.36" y1="631.75" x2="822.46" y2="630.53" stroke="#000088" stroke-width="0.799" stroke-linecap="butt"/><line x1="822.46" y1="630.53" x2="821.65" y2="629.25" stroke="#000088" stroke-width="0.836" stroke-linecap="butt"/><line x1="821.65" y1="629.25" x2="820.92" y2="627.92" stroke="#000088" stroke-width="0.869" stroke-linecap="butt"/><line x1="820.92" y1="627.92" x2="820.29" y2="626.55" stroke="#000088" stroke-width="0.898" stroke-linecap="butt"/><line x1="820.29" y1="626.55" x2="819.75" y2="625.14" stroke="#000088" stroke-width="0.924" stroke-linecap="butt"/><line x1="819.75" y1="625.14" x2="819.30" y2="623.70" stroke="#000088" stroke-width="0.946" stroke-linecap="butt"/><line x1="819.30" y1="623.70" x2="818.95" y2="622.24" stroke="#000088" stroke-width="0.963" stroke-linecap="butt"/><line x1="818.95" y1="622.24" x2="818.70" y2="620.75" stroke="#000088" stroke-width="0.976" stroke-linecap="butt"/><line x1="818.70" y1="620.75" x2="818.55" y2="619.25" stroke="#000088" stroke-width="0.985" stroke-linecap="butt"/><line x1="818.55" y1="619.25" x2="818.50" y2="617.75" stroke="#000088" stroke-width="0.989" stroke-linecap="butt"/><line x1="818.50" y1="617.75" x2="818.55" y2="616.25" stroke="#000088" stroke-width="0.989" stroke-linecap="butt"/><line x1="818.55" y1="616.25" x2="818.70" y2="614.75" stroke="#000088" stroke-width="0.985" stroke-linecap="butt"/><line x1="818.70" y1="614.75" x2="818.95" y2="613.26" stroke="#000088" stroke-width="0.976" stroke-linecap="butt"/><line x1="818.95" y1="613.26" x2="819.30" y2="611.80" stroke="#000088" stroke-width="0.963" stroke-linecap="butt"/><line x1="819.30" y1="611.80" x2="819.75" y2="610.36" stroke="#000088" stroke-width="0.946" stroke-linecap="butt"/><line x1="819.75" y1="610.36" x2="820.29" y2="608.95" stroke="#000088" stroke-width="0.924" stroke-linecap="butt"/><line x1="820.29" y1="608.95" x2="820.92" y2="607.58" stroke="#000088" stroke-width="0.898" stroke-linecap="butt"/><line x1="820.92" y1="607.58" x2="821.65" y2="606.25" stroke="#000088" stroke-width="0.869" stroke-linecap="butt"/><line x1="821.65" y1="606.25" x2="822.46" y2="604.97" stroke="#000088" stroke-width="0.836" stroke-linecap="butt"/><line x1="822.46" y1="604.97" x2="823.36" y2="603.75" stroke="#000088" stroke-width="0.799" stroke-linecap="butt"/><line x1="823.36" y1="603.75" x2="824.33" y2="602.59" stroke="#000088" stroke-width="0.759" stroke-linecap="butt"/><line x1="824.33" y1="602.59" x2="825.38" y2="601.49" stroke="#000088" stroke-width="0.715" stroke-linecap="butt"/><line x1="825.63" y1="601.24" x2="826.76" y2="600.21" stroke="#000088" stroke-width="0.730" stroke-linecap="butt"/><line x1="826.76" y1="600.21" x2="827.94" y2="599.25" stroke="#000088" stroke-width="0.772" stroke-linecap="butt"/><line x1="827.94" y1="599.25" x2="829.19" y2="598.38" stroke="#000088" stroke-width="0.811" stroke-linecap="butt"/><line x1="829.19" y1="598.38" x2="830.50" y2="597.58" stroke="#000088" stroke-width="0.846" stroke-linecap="butt"/><line x1="830.50" y1="597.58" x2="831.86" y2="596.87" stroke="#000088" stroke-width="0.877" stroke-linecap="butt"/><line x1="831.86" y1="596.87" x2="833.26" y2="596.25" stroke="#000088" stroke-width="0.905" stroke-linecap="butt"/><line x1="833.26" y1="596.25" x2="834.70" y2="595.72" stroke="#000088" stroke-width="0.929" stroke-linecap="butt"/><line x1="834.70" y1="595.72" x2="836.17" y2="595.28" stroke="#000088" stroke-width="0.949" stroke-linecap="butt"/><line x1="836.17" y1="595.28" x2="837.67" y2="594.94" stroke="#000088" stroke-width="0.965" stroke-linecap="butt"/><line x1="837.67" y1="594.94" x2="839.18" y2="594.70" stroke="#000088" stroke-width="0.977" stroke-linecap="butt"/><line x1="839.18" y1="594.70" x2="840.71" y2="594.55" stroke="#000088" stroke-width="0.985" stroke-linecap="butt"/><line x1="840.71" y1="594.55" x2="842.25" y2="594.50" stroke="#000088" stroke-width="0.989" stroke-linecap="butt"/><line x1="842.25" y1="594.50" x2="843.79" y2="594.55" stroke="#000088" stroke-width="0.989" stroke-linecap="butt"/><line x1="843.79" y1="594.55" x2="845.32" y2="594.70" stroke="#000088" stroke-width="0.985" stroke-linecap="butt"/><line x1="845.32" y1="594.70" x2="846.83" y2="594.94" stroke="#000088" stroke-width="0.977" stroke-linecap="butt"/><line x1="846.83" y1="594.94" x2="848.33" y2="595.28" stroke="#000088" stroke-width="0.965" stroke-linecap="butt"/><line x1="848.33" y1="595.28" x2="849.80" y2="595.72" stroke="#000088" stroke-width="0.949" stroke-linecap="butt"/><line x1="849.80" y1="595.72" x2="851.24" y2="596.25" stroke="#000088" stroke-width="0.929" stroke-linecap="butt"/><line x1="851.24" y1="596.25" x2="852.64" y2="596.87" stroke="#000088" stroke-width="0.905" stroke-linecap="butt"/><line x1="852.64" y1="596.87" x2="854.00" y2="597.58" stroke="#000088" stroke-width="0.877" stroke-linecap="butt"/><line x1="854.00" y1="597.58" x2="855.31" y2="598.38" stroke="#000088" stroke-width="0.846" stroke-linecap="butt"/><line x1="855.31" y1="598.38" x2="856.56" y2="599.25" stroke="#000088" stroke-width="0.811" stroke-linecap="butt"/><line x1="856.56" y1="599.25" x2="857.74" y2="600.21" stroke="#000088" stroke-width="0.772" stroke-linecap="butt"/><line x1="857.74" y1="600.21" x2="858.87" y2="601.24" stroke="#000088" stroke-width="0.730" stroke-linecap="butt"/><line x1="858.62" y1="601.49" x2="859.67" y2="602.59" stroke="#000088" stroke-width="0.715" stroke-linecap="butt"/><line x1="859.67" y1="602.59" x2="860.64" y2="603.75" stroke="#000088" stroke-width="0.759" stroke-linecap="butt"/><line x1="860.64" y1="603.75" x2="861.54" y2="604.97" stroke="#000088" stroke-width="0.799" stroke-linecap="butt"/><line x1="861.54" y1="604.97" x2="862.35" y2="606.25" stroke="#000088" stroke-width="0.836" stroke-linecap="butt"/><line x1="862.35" y1="606.25" x2="863.08" y2="607.58" stroke="#000088" stroke-width="0.869" stroke-linecap="butt"/><line x1="863.08" y1="607.58" x2="863.71" y2="608.95" stroke="#000088" stroke-width="0.898" stroke-linecap="butt"/><line x1="863.71" y1="608.95" x2="864.25" y2="610.36" stroke="#000088" stroke-width="0.924" stroke-linecap="butt"/><line x1="864.25" y1="610.36" x2="864.70" y2="611.80" stroke="#000088" stroke-width="0.946" stroke-linecap="butt"/><line x1="864.70" y1="611.80" x2="865.05" y2="613.26" stroke="#000088" stroke-width="0.963" stroke-linecap="butt"/><line x1="865.05" y1="613.26" x2="865.30" y2="614.75" stroke="#000088" stroke-width="0.976" stroke-linecap="butt"/><line x1="865.30" y1="614.75" x2="865.45" y2="616.25" stroke="#000088" stroke-width="0.985" stroke-linecap="butt"/><line x1="865.45" y1="616.25" x2="865.50" y2="617.75" stroke="#000088" stroke-width="0.989" stroke-linecap="butt"/>
<line x1="865.50" y1="808.25" x2="865.45" y2="809.79" stroke="#000088" stroke-width="0.989" stroke-linecap="butt"/><line x1="865.45" y1="809.79" x2="865.30" y2="811.32" stroke="#000088" stroke-width="0.985" stroke-linecap="butt"/><line x1="865.30" y1="811.32" x2="865.05" y2="812.83" stroke="#000088" stroke-width="0.977" stroke-linecap="butt"/><line x1="865.05" y1="812.83" x2="864.70" y2="814.33" stroke="#000088" stroke-width="0.964" stroke-linecap="butt"/><line x1="864.70" y1="814.33" x2="864.25" y2="815.80" stroke="#000088" stroke-width="0.947" stroke-linecap="butt"/><line x1="864.25" y1="815.80" x2="863.71" y2="817.24" stroke="#000088" stroke-width="0.927" stroke-linecap="butt"/><line x1="863.71" y1="817.24" x2="863.08" y2="818.64" stroke="#000088" stroke-width="0.902" stroke-linecap="butt"/><line x1="863.08" y1="818.64" x2="862.35" y2="820.00" stroke="#000088" stroke-width="0.873" stroke-linecap="butt"/><line x1="862.35" y1="820.00" x2="861.54" y2="821.31" stroke="#000088" stroke-width="0.841" stroke-linecap="butt"/><line x1="861.54" y1="821.31" x2="860.64" y2="822.56" stroke="#000088" stroke-width="0.805" stroke-linecap="butt"/><line x1="860.64" y1="822.56" x2="859.67" y2="823.74" stroke="#000088" stroke-width="0.765" stroke-linecap="butt"/><line x1="859.67" y1="823.74" x2="858.62" y2="824.87" stroke="#000088" stroke-width="0.723" stroke-linecap="butt"/><line x1="858.87" y1="824.62" x2="857.74" y2="825.67" stroke="#000088" stroke-width="0.723" stroke-linecap="butt"/><line x1="857.74" y1="825.67" x2="856.56" y2="826.64" stroke="#000088" stroke-width="0.765" stroke-linecap="butt"/><line x1="856.56" y1="826.64" x2="855.31" y2="827.54" stroke="#000088" stroke-width="0.805" stroke-linecap="butt"/><line x1="855.31" y1="827.54" x2="854.00" y2="828.35" stroke="#000088" stroke-width="0.841" stroke-linecap="butt"/><line x1="854.00" y1="828.35" x2="852.64" y2="829.08" stroke="#000088" stroke-width="0.873" stroke-linecap="butt"/><line x1="852.64" y1="829.08" x2="851.24" y2="829.71" stroke="#000088" stroke-width="0.902" stroke-linecap="butt"/><line x1="851.24" y1="829.71" x2="849.80" y2="830.25" stroke="#000088" stroke-width="0.927" stroke-linecap="butt"/><line x1="849.80" y1="830.25" x2="848.33" y2="830.70" stroke="#000088" stroke-width="0.947" stroke-linecap="butt"/><line x1="848.33" y1="830.70" x2="846.83" y2="831.05" stroke="#000088" stroke-width="0.964" stroke-linecap="butt"/><line x1="846.83" y1="831.05" x2="845.32" y2="831.30" stroke="#000088" stroke-width="0.977" stroke-linecap="butt"/><line x1="845.32" y1="831.30" x2="843.79" y2="831.45" stroke="#000088" stroke-width="0.985" stroke-linecap="butt"/><line x1="843.79" y1="831.45" x2="842.25" y2="831.50" stroke="#000088" stroke-width="0.989" stroke-linecap="butt"/><line x1="842.25" y1="831.50" x2="840.71" y2="831.45" stroke="#000088" stroke-width="0.989" stroke-linecap="butt"/><line x1="840.71" y1="831.45" x2="839.18" y2="831.30" stroke="#000088" stroke-width="0.985" stroke-linecap="butt"/><line x1="839.18" y1="831.30" x2="837.67" y2="831.05" stroke="#000088" stroke-width="0.977" stroke-linecap="butt"/><line x1="837.67" y1="831.05" x2="836.17" y2="830.70" stroke="#000088" stroke-width="0.964" stroke-linecap="butt"/><line x1="836.17" y1="830.70" x2="834.70" y2="830.25" stroke="#000088" stroke-width="0.947" stroke-linecap="butt"/><line x1="834.70" y1="830.25" x2="833.26" y2="829.71" stroke="#000088" stroke-width="0.927" stroke-linecap="butt"/><line x1="833.26" y1="829.71" x2="831.86" y2="829.08" stroke="#000088" stroke-width="0.902" stroke-linecap="butt"/><line x1="831.86" y1="829.08" x2="830.50" y2="828.35" stroke="#000088" stroke-width="0.873" stroke-linecap="butt"/><line x1="830.50" y1="828.35" x2="829.19" y2="827.54" stroke="#000088" stroke-width="0.841" stroke-linecap="butt"/><line x1="829.19" y1="827.54" x2="827.94" y2="826.64" stroke="#000088" stroke-width="0.805" stroke-linecap="butt"/><line x1="827.94" y1="826.64" x2="826.76" y2="825.67" stroke="#000088" stroke-width="0.765" stroke-linecap="butt"/><line x1="826.76" y1="825.67" x2="825.63" y2="824.62" stroke="#000088" stroke-width="0.723" stroke-linecap="butt"/><line x1="825.38" y1="824.87" x2="824.33" y2="823.74" stroke="#000088" stroke-width="0.723" stroke-linecap="butt"/><line x1="824.33" y1="823.74" x2="823.36" y2="822.56" stroke="#000088" stroke-width="0.765" stroke-linecap="butt"/><line x1="823.36" y1="822.56" x2="822.46" y2="821.31" stroke="#000088" stroke-width="0.805" stroke-linecap="butt"/><line x1="822.46" y1="821.31" x2="821.65" y2="820.00" stroke="#000088" stroke-width="0.841" stroke-linecap="butt"/><line x1="821.65" y1="820.00" x2="820.92" y2="818.64" stroke="#000088" stroke-width="0.873" stroke-linecap="butt"/><line x1="820.92" y1="818.64" x2="820.29" y2="817.24" stroke="#000088" stroke-width="0.902" stroke-linecap="butt"/><line x1="820.29" y1="817.24" x2="819.75" y2="815.80" stroke="#000088" stroke-width="0.927" stroke-linecap="butt"/><line x1="819.75" y1="815.80" x2="819.30" y2="814.33" stroke="#000088" stroke-width="0.947" stroke-linecap="butt"/><line x1="819.30" y1="814.33" x2="818.95" y2="812.83" stroke="#000088" stroke-width="0.964" stroke-linecap="butt"/><line x1="818.95" y1="812.83" x2="818.70" y2="811.32" stroke="#000088" stroke-width="0.977" stroke-linecap="butt"/><line x1="818.70" y1="811.32" x2="818.55" y2="809.79" stroke="#000088" stroke-width="0.985" stroke-linecap="butt"/><line x1="818.55" y1="809.79" x2="818.50" y2="808.25" stroke="#000088" stroke-width="0.989" stroke-linecap="butt"/><line x1="818.50" y1="808.25" x2="818.55" y2="806.71" stroke="#000088" stroke-width="0.989" stroke-linecap="butt"/><line x1="818.55" y1="806.71" x2="818.70" y2="805.18" stroke="#000088" stroke-width="0.985" stroke-linecap="butt"/><line x1="818.70" y1="805.18" x2="818.95" y2="803.67" stroke="#000088" stroke-width="0.977" stroke-linecap="butt"/><line x1="818.95" y1="803.67" x2="819.30" y2="802.17" stroke="#000088" stroke-width="0.964" stroke-linecap="butt"/><line x1="819.30" y1="802.17" x2="819.75" y2="800.70" stroke="#000088" stroke-width="0.947" stroke-linecap="butt"/><line x1="819.75" y1="800.70" x2="820.29" y2="799.26" stroke="#000088" stroke-width="0.927" stroke-linecap="butt"/><line x1="820.29" y1="799.26" x2="820.92" y2="797.86" stroke="#000088" stroke-width="0.902" stroke-linecap="butt"/><line x1="820.92" y1="797.86" x2="821.65" y2="796.50" stroke="#000088" stroke-width="0.873" stroke-linecap="butt"/><line x1="821.65" y1="796.50" x2="822.46" y2="795.19" stroke="#000088" stroke-width="0.841" stroke-linecap="butt"/><line x1="822.46" y1="795.19" x2="823.36" y2="793.94" stroke="#000088" stroke-width="0.805" stroke-linecap="butt"/><line x1="823.36" y1="793.94" x2="824.33" y2="792.76" stroke="#000088" stroke-width="0.765" stroke-linecap="butt"/><line x1="824.33" y1="792.76" x2="825.38" y2="791.63" stroke="#000088" stroke-width="0.723" stroke-linecap="butt"/><line x1="825.63" y1="791.38" x2="826.76" y2="790.33" stroke="#000088" stroke-width="0.723" stroke-linecap="butt"/><line x1="826.76" y1="790.33" x2="827.94" y2="789.36" stroke="#000088" stroke-width="0.765" stroke-linecap="butt"/><line x1="827.94" y1="789.36" x2="829.19" y2="788.46" stroke="#000088" stroke-width="0.805" stroke-linecap="butt"/><line x1="829.19" y1="788.46" x2="830.50" y2="787.65" stroke="#000088" stroke-width="0.841" stroke-linecap="butt"/><line x1="830.50" y1="787.65" x2="831.86" y2="786.92" stroke="#000088" stroke-width="0.873" stroke-linecap="butt"/><line x1="831.86" y1="786.92" x2="833.26" y2="786.29" stroke="#000088" stroke-width="0.902" stroke-linecap="butt"/><line x1="833.26" y1="786.29" x2="834.70" y2="785.75" stroke="#000088" stroke-width="0.927" stroke-linecap="butt"/><line x1="834.70" y1="785.75" x2="836.17" y2="785.30" stroke="#000088" stroke-width="0.947" stroke-linecap="butt"/><line x1="836.17" y1="785.30" x2="837.67" y2="784.95" stroke="#000088" stroke-width="0.964" stroke-linecap="butt"/><line x1="837.67" y1="784.95" x2="839.18" y2="784.70" stroke="#000088" stroke-width="0.977" stroke-linecap="butt"/><line x1="839.18" y1="784.70" x2="840.71" y2="784.55" stroke="#000088" stroke-width="0.985" stroke-linecap="butt"/><line x1="840.71" y1="784.55" x2="842.25" y2="784.50" stroke="#000088" stroke-width="0.989" stroke-linecap="butt"/><line x1="842.25" y1="784.50" x2="843.79" y2="784.55" stroke="#000088" stroke-width="0.989" stroke-linecap="butt"/><line x1="843.79" y1="784.55" x2="845.32" y2="784.70" stroke="#000088" stroke-width="0.985" stroke-linecap="butt"/><line x1="845.32" y1="784.70" x2="846.83" y2="784.95" stroke="#000088" stroke-width="0.977" stroke-linecap="butt"/><line x1="846.83" y1="784.95" x2="848.33" y2="785.30" stroke="#000088" stroke-width="0.964" stroke-linecap="butt"/><line x1="848.33" y1="785.30" x2="849.80" y2="785.75" stroke="#000088" stroke-width="0.947" stroke-linecap="butt"/><line x1="849.80" y1="785.75" x2="851.24" y2="786.29" stroke="#000088" stroke-width="0.927" stroke-linecap="butt"/><line x1="851.24" y1="786.29" x2="852.64" y2="786.92" stroke="#000088" stroke-width="0.902" stroke-linecap="butt"/><line x1="852.64" y1="786.92" x2="854.00" y2="787.65" stroke="#000088" stroke-width="0.873" stroke-linecap="butt"/><line x1="854.00" y1="787.65" x2="855.31" y2="788.46" stroke="#000088" stroke-width="0.841" stroke-linecap="butt"/><line x1="855.31" y1="788.46" x2="856.56" y2="789.36" stroke="#000088" stroke-width="0.805" stroke-linecap="butt"/><line x1="856.56" y1="789.36" x2="857.74" y2="790.33" stroke="#000088" stroke-width="0.765" stroke-linecap="butt"/><line x1="857.74" y1="790.33" x2="858.87" y2="791.38" stroke="#000088" stroke-width="0.723" stroke-linecap="butt"/><line x1="858.62" y1="791.63" x2="859.67" y2="792.76" stroke="#000088" stroke-width="0.723" stroke-linecap="butt"/><line x1="859.67" y1="792.76" x2="860.64" y2="793.94" stroke="#000088" stroke-width="0.765" stroke-linecap="butt"/><line x1="860.64" y1="793.94" x2="861.54" y2="795.19" stroke="#000088" stroke-width="0.805" stroke-linecap="butt"/><line x1="861.54" y1="795.19" x2="862.35" y2="796.50" stroke="#000088" stroke-width="0.841" stroke-linecap="butt"/><line x1="862.35" y1="796.50" x2="863.08" y2="797.86" stroke="#000088" stroke-width="0.873" stroke-linecap="butt"/><line x1="863.08" y1="797.86" x2="863.71" y2="799.26" stroke="#000088" stroke-width="0.902" stroke-linecap="butt"/><line x1="863.71" y1="799.26" x2="864.25" y2="800.70" stroke="#000088" stroke-width="0.927" stroke-linecap="butt"/><line x1="864.25" y1="800.70" x2="864.70" y2="802.17" stroke="#000088" stroke-width="0.947" stroke-linecap="butt"/><line x1="864.70" y1="802.17" x2="865.05" y2="803.67" stroke="#000088" stroke-width="0.964" stroke-linecap="butt"/><line x1="865.05" y1="803.67" x2="865.30" y2="805.18" stroke="#000088" stroke-width="0.977" stroke-linecap="butt"/><line x1="865.30" y1="805.18" x2="865.45" y2="806.71" stroke="#000088" stroke-width="0.985" stroke-linecap="butt"/><line x1="865.45" y1="806.71" x2="865.50" y2="808.25" stroke="#000088" stroke-width="0.989" stroke-linecap="butt"/>
</g>
<g shape-rendering="crispEdges" fill="#0000ff"><rect x="6" y="504" width="1" height="1"/><rect x="7" y="504" width="1" height="1"/><rect x="8" y="504" width="1" height="1"/><rect x="9" y="500" width="1" height="1"/><rect x="9" y="501" width="1" height="1"/><rect x="9" y="502" width="1" height="1"/><rect x="9" y="503" width="1" height="1"/><rect x="9" y="504" width="1" height="1"/><rect x="9" y="505" width="1" height="1"/><rect x="9" y="506" width="1" height="1"/><rect x="9" y="507" width="1" height="1"/><rect x="9" y="508" width="1" height="1"/><rect x="10" y="500" width="1" height="1"/><rect x="10" y="501" width="1" height="1"/><rect x="10" y="502" width="1" height="1"/><rect x="10" y="503" width="1" height="1"/><rect x="10" y="504" width="1" height="1"/><rect x="10" y="505" width="1" height="1"/><rect x="10" y="506" width="1" height="1"/><rect x="10" y="507" width="1" height="1"/><rect x="10" y="508" width="1" height="1"/><rect x="11" y="501" width="1" height="1"/><rect x="11" y="508" width="1" height="1"/><rect x="12" y="500" width="1" height="1"/><rect x="12" y="509" width="1" height="1"/><rect x="12" y="510" width="1" height="1"/><rect x="13" y="499" width="1" height="1"/><rect x="13" y="509" width="1" height="1"/><rect x="13" y="510" width="1" height="1"/><rect x="14" y="498" width="1" height="1"/><rect x="14" y="508" width="1" height="1"/><rect x="14" y="509" width="1" height="1"/><rect x="14" y="510" width="1" height="1"/><rect x="14" y="511" width="1" height="1"/><rect x="15" y="497" width="1" height="1"/><rect x="15" y="510" width="1" height="1"/><rect x="15" y="512" width="1" height="1"/><rect x="16" y="513" width="1" height="1"/></g>
</svg>
</body></html>
